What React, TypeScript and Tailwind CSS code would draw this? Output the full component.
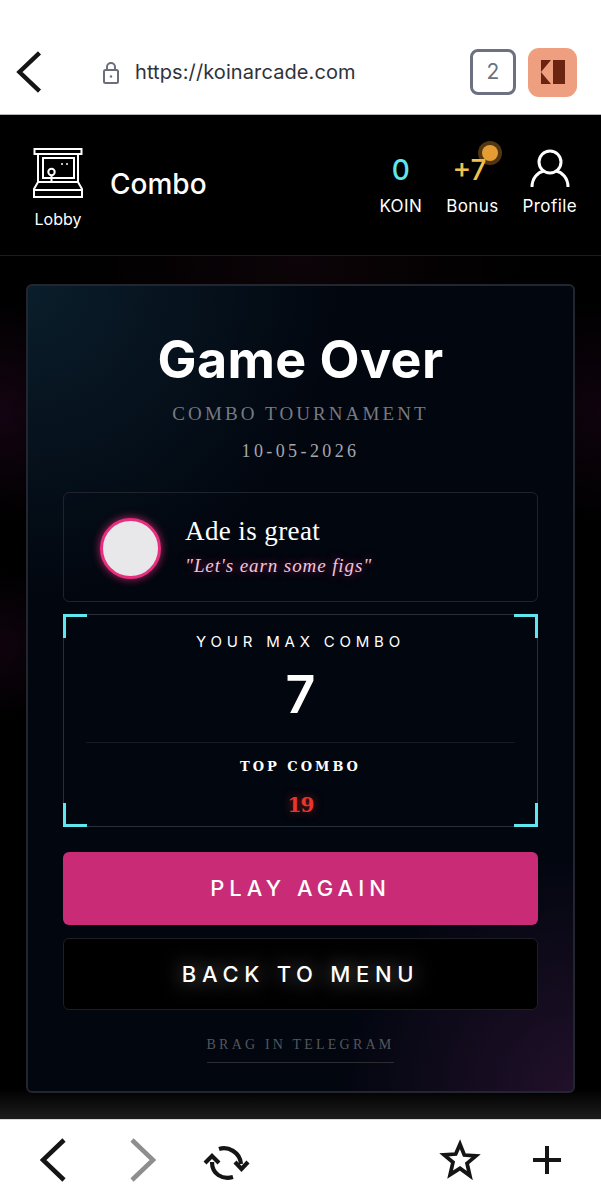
import React from 'react'

const display = "font-['Inter',sans-serif]"
const slab = "font-['Liberation_Serif',serif]"
const slabBold = "font-['DejaVu_Serif',serif]"

const ArcadeIcon = () => (
    <svg width="52" height="52" viewBox="0 0 52 52" fill="none" stroke="white" strokeWidth="2">
        <rect x="2.5" y="2" width="47" height="5" />
        <path d="M6 7v28M46 7v28" />
        <rect x="11" y="11" width="31" height="20" />
        <circle cx="19.5" cy="25" r="3.2" />
        <path d="M19.5 28.5V35" />
        <path d="M29 17h2M34 17h2" strokeWidth="1.6" />
        <path d="M6 35h40l4 7v8H2v-8z" />
        <path d="M2 43h48" />
    </svg>
)

const ProfileIcon = () => (
    <svg width="40" height="40" viewBox="0 0 40 40" fill="none" stroke="white" strokeWidth="3">
        <circle cx="20" cy="14" r="11" />
        <path d="M2 39c0-9 6-15 12-16M38 39c0-9-6-15-12-16" />
    </svg>
)

const Chevron = ({ flip, color, height }: { flip?: boolean; color: string; height: number }) => (
    <svg width="26" height={height} viewBox="0 0 26 44" fill="none" stroke={color} strokeWidth="4.6" className={flip ? "-scale-x-100" : ""}>
        <path d="M24 2L3 22l21 20" />
    </svg>
)

const Corner = ({ className }: { className: string }) => (
    <span className={`absolute w-6 h-6 border-[#5fe6ee] ${className}`} />
)

const HeaderStat = ({ top, label }: { top: React.ReactNode; label: string }) => (
    <div className="flex flex-col items-center">
        <div className="h-[46px] flex items-center justify-center">{top}</div>
        <span className={`${display} text-[17px] leading-5 text-white mt-[5px] tracking-[0.4px]`}>{label}</span>
    </div>
)

export default function App() {
    return (
        <div className="w-[601px] h-[1200px] flex flex-col bg-black overflow-hidden">
            {/* BROWSER TOP */}
            <div className="h-[115px] shrink-0 bg-white border-b border-[#b4b6bf] pt-[47px] pl-[16px] pr-[24px]">
                <div className="flex items-center h-[50px]">
                    <Chevron color="#151515" height={42} />
                    <svg width="18" height="23" viewBox="0 0 18 23" fill="none" stroke="#6c6e7c" strokeWidth="2" className="ml-[60px] mt-[1px]">
                        <rect x="2" y="9" width="14" height="13" rx="1.5" />
                        <path d="M5 9V6a4 4 0 0 1 8 0v3" />
                        <circle cx="9" cy="15.5" r="1.2" fill="#6c6e7c" stroke="none" />
                    </svg>
                    <span className="font-['Inter',sans-serif] text-[20px] text-[#30323a] ml-[15px] tracking-[0.1px]">https://koinarcade.com</span>
                    <div className="ml-auto w-[46px] h-[46px] rounded-[8px] border-[3px] border-[#6c7080] flex items-center justify-center text-[21px] text-[#6c7080] font-['Inter',sans-serif]">2</div>
                    <div className="ml-[12px] w-[49px] h-[49px] rounded-[11px] bg-[#ee9f7f] flex items-center justify-center">
                        <svg width="24" height="24" viewBox="0 0 24 24" fill="#6b2410">
                            <path d="M0 0h10L0 12zM0 24h10L0 12z" />
                            <rect x="12" width="12" height="24" />
                        </svg>
                    </div>
                </div>
            </div>

            {/* APP HEADER */}
            <header className="h-[141px] shrink-0 bg-black border-b border-[#1a1c1f] flex items-start pl-[32px] pr-[24px] pt-[32px]">
                <div className="flex flex-col items-center w-[52px]">
                    <ArcadeIcon />
                    <span className={`${display} text-[16px] leading-5 text-white mt-[10px]`}>Lobby</span>
                </div>
                <span className={`${display} text-[28px] font-medium text-white ml-[26px] mt-[21px] leading-8`}>Combo</span>
                <div className="ml-auto flex gap-[24px] -mt-[2px]">
                    <HeaderStat top={<span className={`${display} text-[28px] font-medium text-[#5fe6ee] mt-[4px]`}>0</span>} label="KOIN" />
                    <div className="relative">
                        <HeaderStat top={<span className={`${display} text-[28px] font-medium text-[#f1c252] mt-[4px] mr-[6px]`}>+7</span>} label="Bonus" />
                        <span className="absolute top-0 right-[1px] w-4 h-4 rounded-full bg-[#e59c33] shadow-[0_0_0_4px_rgba(229,156,51,0.35)]" />
                    </div>
                    <HeaderStat top={<ProfileIcon />} label="Profile" />
                </div>
            </header>

            {/* MAIN */}
            <main className="flex-1 min-h-0 px-[26px] pt-[28px] bg-[radial-gradient(circle_at_50%_0%,rgba(236,72,153,0.05),transparent_25%),radial-gradient(circle_at_0%_18%,rgba(190,40,170,0.1),transparent_12%),radial-gradient(circle_at_100%_18%,rgba(190,40,170,0.08),transparent_12%),radial-gradient(circle_at_0%_45%,rgba(190,40,170,0.08),transparent_10%),linear-gradient(to_bottom,#000_96.5%,#1c1c1c)]">
                <div className="h-[809px] rounded-[6px] border-2 border-[#23262e] flex flex-col px-[35px] pt-[42px] bg-[radial-gradient(circle_at_0%_0%,#0a1e2b,transparent_32%),radial-gradient(circle_at_100%_100%,#21102a,transparent_24%),linear-gradient(#02060f,#02060f)]">
                    <h1 className={`${display} text-[52px] leading-[64px] font-bold text-white text-center tracking-[0.4px]`}>Game Over</h1>
                    <p className={`${slab} text-[19px] leading-6 text-[#777a82] text-center tracking-[3.1px] mt-[10px]`}>COMBO TOURNAMENT</p>
                    <p className={`${slab} text-[18px] leading-6 text-[#a5a7ab] text-center tracking-[3.4px] mt-[13px]`}>10-05-2026</p>

                    {/* PLAYER */}
                    <div className="h-[110px] mt-[29px] rounded-[6px] border border-[#1f232c] flex items-center pl-[36px]">
                        <div className="w-[61px] h-[61px] rounded-full bg-[#e8e8ea] border-[3px] border-[#e5307f] shadow-[0_0_9px_rgba(229,48,127,0.8)] mt-[2px]" />
                        <div className="ml-[24px]">
                            <p className={`${slab} text-[27px] leading-7 text-white tracking-[0.4px]`}>Ade is great</p>
                            <p className={`${slab} text-[19px] leading-6 italic text-[#f0c6dd] mt-[9px] tracking-[0.9px] [text-shadow:0_0_8px_rgba(229,48,127,0.6)]`}>"Let's earn some figs"</p>
                        </div>
                    </div>

                    {/* SCORE */}
                    <div className="relative h-[213px] mt-[12px] border border-[#2a2e38] flex flex-col items-center px-[22px] pt-[19px]">
                        <Corner className="-top-px -left-px border-t-[3px] border-l-[3px]" />
                        <Corner className="-top-px -right-px border-t-[3px] border-r-[3px]" />
                        <Corner className="-bottom-px -left-px border-b-[3px] border-l-[3px]" />
                        <Corner className="-bottom-px -right-px border-b-[3px] border-r-[3px]" />
                        <p className={`${display} text-[15px] leading-4 text-white tracking-[4.8px]`}>YOUR MAX COMBO</p>
                        <p className={`${display} text-[52px] leading-[52px] font-semibold text-white mt-[19px]`}>7</p>
                        <div className="w-full border-t border-[#171a22] mt-[21px]" />
                        <p className={`${slabBold} text-[13px] leading-4 font-bold text-white tracking-[3px] mt-[16px]`}>TOP COMBO</p>
                        <p className={`${slabBold} text-[20px] leading-6 font-bold text-[#e8352a] mt-[18px] tracking-[-1px] [text-shadow:0_0_10px_rgba(232,53,42,0.5)]`}>19</p>
                    </div>

                    {/* ACTIONS */}
                    <button className={`${display} h-[73px] mt-[25px] rounded-[6px] bg-[#c92b76] text-white text-[22px] font-medium tracking-[5px]`}>PLAY AGAIN</button>
                    <button className={`${display} h-[72px] mt-[13px] rounded-[6px] bg-black border border-[#1d1f25] text-white text-[22px] font-medium tracking-[5.7px] [text-shadow:0_0_20px_rgba(255,255,255,0.5)]`}>BACK TO MENU</button>
                    <div className="flex justify-center mt-[27px]">
                        <span className={`${slab} text-[14px] leading-4 text-[#55565c] tracking-[3.2px] pb-[9px] border-b border-[#2c2d33]`}>BRAG IN TELEGRAM</span>
                    </div>
                </div>
            </main>

            {/* BROWSER BOTTOM */}
            <nav className="h-[81px] shrink-0 bg-white border-t border-[#d8d8da] flex items-center pl-[40px] pr-[40px]">
                <Chevron color="#151515" height={44} />
                <div className="ml-[64px]"><Chevron flip color="#8e8e8e" height={44} /></div>
                <svg width="70" height="60" viewBox="0 0 70 60" fill="none" stroke="#151515" strokeWidth="4.2" className="ml-[34px]">
                    <path d="M29 19C38 16 50 22 51 34" />
                    <path d="M45 32l6.500 7 6.500-7" />
                    <path d="M43 47C32 50 22 44 22 32" />
                    <path d="M15 33l7-7 7 7" />
                </svg>
                <svg width="42" height="42" viewBox="0 0 40 40" fill="none" stroke="#151515" strokeWidth="3.6" className="ml-auto">
                    <path d="M20 5l4.100 10.300 11.100.8-8.500 7.100 2.700 11.700L20 28l-9.400 5.900 2.700-11.700-8.500-7.100 11.100-.8z" />
                </svg>
                <svg width="28" height="28" viewBox="0 0 28 28" fill="none" stroke="#151515" strokeWidth="4" className="ml-[52px]">
                    <path d="M14 0v28M0 14h28" />
                </svg>
            </nav>
        </div>
    )
}
